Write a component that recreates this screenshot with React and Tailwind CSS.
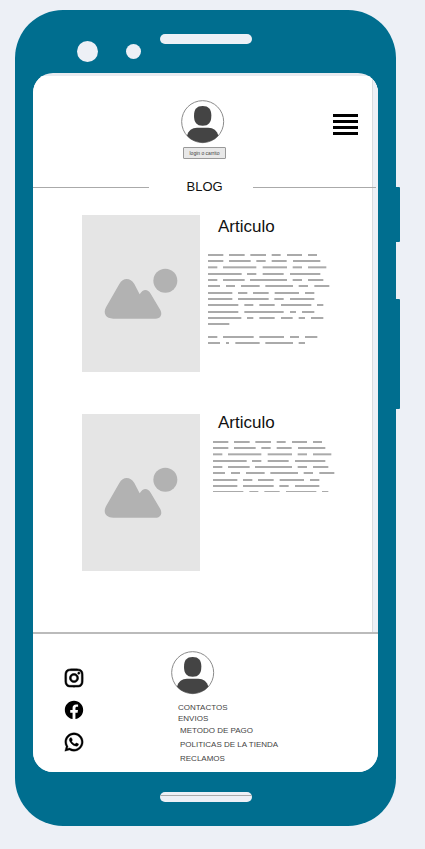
import { RiInstagramLine, RiFacebookCircleFill, RiWhatsappLine } from "react-icons/ri";

// Each row lists the [start, end] of its placeholder words.
const WORD_ROWS = [
  [6, [[0, 46], [63, 110], [127, 174], [191, 218], [237, 282], [300, 327]]],
  [24, [[0, 46], [63, 128], [145, 173], [191, 236], [255, 337]]],
  [43, [[0, 28], [45, 145], [164, 237], [254, 282], [300, 355]]],
  [63, [[0, 101], [117, 145], [164, 227], [246, 337]]],
  [81, [[0, 28], [45, 110], [126, 237], [254, 282], [300, 346]]],
  [99, [[0, 36], [54, 81], [99, 155], [172, 255], [272, 300], [319, 364]]],
  [120, [[0, 73], [90, 118], [135, 182], [200, 273], [291, 319]]],
  [138, [[0, 73], [90, 182], [199, 227], [246, 319]]],
  [156, [[0, 91], [109, 136], [154, 200], [219, 310], [327, 346]]],
  [177, [[0, 91], [109, 227], [246, 264], [282, 319]]],
  [195, [[0, 100], [117, 136], [154, 200], [219, 254], [272, 291], [309, 346]]],
  [213, [[0, 64]]],
  [252, [[0, 28], [45, 137], [154, 228], [246, 273], [291, 328]]],
  [270, [[0, 36], [54, 63], [82, 155], [172, 255], [272, 291]]],
];

const ARTICLES = [
  { id: 1, rows: 14, height: 279, title: "leading-[24px]", body: "mt-3.5" },
  { id: 2, rows: 9, height: 157, title: "leading-[18px]", body: "mt-2 ml-[5px]" },
];

const SOCIAL = [
  { label: "Instagram", Icon: RiInstagramLine, stroke: "0.5" },
  { label: "Facebook", Icon: RiFacebookCircleFill, stroke: "0" },
  { label: "WhatsApp", Icon: RiWhatsappLine, stroke: "0.4" },
];

const LINKS = [
  { text: "CONTACTOS", box: "leading-[11px]" },
  { text: "ENVIOS", box: "leading-[11px]" },
  { text: "METODO DE PAGO", box: "leading-[14px] pl-0.5" },
  { text: "POLITICAS DE LA TIENDA", box: "leading-[14px] pl-0.5" },
  { text: "RECLAMOS", box: "leading-[14px] pl-0.5" },
];

function Avatar() {
  return (
    <svg viewBox="0 0 132 132" className="block size-11" aria-hidden="true">
      <circle cx="65" cy="65" r="63" fill="#fff" stroke="#8a8a8a" strokeWidth="3" />
      <path
        d="M65 18C83 18 91 28 91 47C91 67 83 77 65 77C47 77 39 67 39 47C39 28 47 18 65 18Z"
        fill="#444"
      />
      <path d="M18 107C22 91 33 83 48 83H82C97 83 108 91 112 107A63 63 0 0 1 18 107Z" fill="#444" />
    </svg>
  );
}

function Picture() {
  return (
    <svg viewBox="0 0 354 471" className="block w-[118px] h-[157px] shrink-0 bg-[#e5e5e5]" aria-hidden="true">
      <circle cx="250" cy="197" r="36" fill="#b2b2b2" />
      <path
        d="M72 277L112 207C123 187 145 187 157 207L173 238C183 221 197 221 206 236L235 285C242 299 236 311 220 311H94C72 311 62 296 72 277Z"
        fill="#b2b2b2"
      />
    </svg>
  );
}

function PlaceholderText({ rows, height }) {
  return (
    <svg width={366 / 3} height={height / 3} viewBox={`0 0 366 ${height}`} className="block" aria-hidden="true">
      {WORD_ROWS.slice(0, rows).map(([y, words]) =>
        words.map(([a, b]) => <rect key={`${y}-${a}`} x={a} y={y - 3} width={b - a} height="6" fill="#aaa" />)
      )}
    </svg>
  );
}

export default function App() {
  return (
    <div className="min-h-screen bg-[#edf0f6] pt-2.5 pb-[23px] pl-[15px] pr-[29px] font-['Liberation_Sans',Arial,sans-serif]">
      <div className="relative rounded-[48px] bg-[#006e8f] px-[18px] pb-6">
        <span className="absolute -right-1 top-[177px] h-[55px] w-2 rounded-r-[1px] bg-[#006e8f]" />
        <span className="absolute -right-1 top-[289px] h-[110px] w-2 rounded-r-[1px] bg-[#006e8f]" />

        <div className="grid h-[63px] grid-cols-[1fr_92px_1fr] pt-6">
          <div className="flex h-[34px] items-center gap-7 pl-11">
            <span className="size-[21px] rounded-full bg-[#edf0f6]" />
            <span className="size-[15px] rounded-full bg-[#edf0f6]" />
          </div>
          <span className="h-2.5 rounded-full bg-[#edf0f6]" />
        </div>

        <div className="overflow-hidden rounded-[20px] bg-[#e9ebf0] pt-[3px]">
          <div className="border-r-[5px] border-[#edf0f6] bg-white">
            <div className="border-r border-[#d9dce0] pb-[61px]">
              <header className="grid grid-cols-[1fr_auto_1fr] items-start pt-6">
                <span />
                <div className="flex flex-col items-center gap-[3px]">
                  <Avatar />
                  <button className="ml-1 h-3 w-[43px] rounded-[1px] border border-[#999] bg-[#e8e8e8] text-[5px] leading-none whitespace-nowrap text-[#444]">
                    login o carrito
                  </button>
                </div>
                <button aria-label="Menu" className="mt-3.5 mr-3.5 flex w-[25px] flex-col gap-[3px] justify-self-end">
                  <span className="h-[3px] w-full bg-black" />
                  <span className="h-[3px] w-full bg-black" />
                  <span className="h-[3px] w-full bg-black" />
                  <span className="h-[3px] w-full bg-black" />
                </button>
              </header>

              <div className="-mr-1 mt-[19px] grid grid-cols-[15fr_104px_16fr] items-center">
                <span className="h-px bg-[#aaa]" />
                <h1 className="pl-2 text-center text-[13px] leading-[18px] text-[#111]">BLOG</h1>
                <span className="h-px bg-[#aaa]" />
              </div>

              <main className="mt-[19px] flex flex-col gap-[42px] pl-[49px]">
                {ARTICLES.map(({ id, rows, height, title, body }) => (
                  <article key={id} className="flex gap-2">
                    <Picture />
                    <div>
                      <h2 className={`pl-2.5 text-[17px] text-[#111] ${title}`}>Articulo</h2>
                      <div className={body}>
                        <PlaceholderText rows={rows} height={height} />
                      </div>
                    </div>
                  </article>
                ))}
              </main>
            </div>
          </div>

          <footer className="flex gap-[86px] border-t-2 border-[#bbb] bg-white pt-[17px] pb-1.5 pl-[30px]">
            <ul className="flex flex-col gap-2.5 pt-4">
              {SOCIAL.map(({ label, Icon, stroke }) => (
                <li key={label}>
                  <a href="#" aria-label={label} className="block text-black">
                    <Icon className="block size-[22px]" strokeWidth={stroke} />
                  </a>
                </li>
              ))}
            </ul>
            <div className="flex-1">
              <Avatar />
              <ul className="mt-[7px] pl-[7px] text-[8px] whitespace-nowrap text-[#444]">
                {LINKS.map(({ text, box }) => (
                  <li key={text} className={box}>
                    <a href="#" className="block">{text}</a>
                  </li>
                ))}
              </ul>
            </div>
          </footer>
        </div>

        <div className="mx-auto mt-5 h-2.5 w-[92px] overflow-hidden rounded-full bg-[#edf0f6] pt-[3px]">
          <div className="h-px bg-[#aaa]" />
        </div>
      </div>
    </div>
  );
}
